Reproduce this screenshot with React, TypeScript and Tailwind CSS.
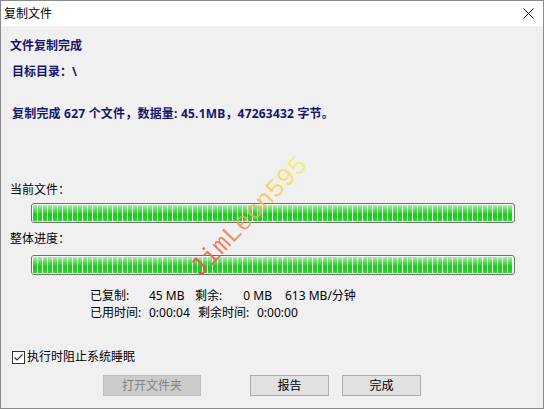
import React from "react";

const FONT = "font-['Noto_Sans','Noto_Sans_CJK_SC',sans-serif]";

function ProgressBar() {
  return (
    <div className="ml-[30px] w-[484px] h-[20px] rounded-[3px] border border-[#6f6f6f] bg-white p-px">
      <div className="h-full w-full bg-[image:repeating-linear-gradient(90deg,transparent_0_4px,#e6f7e6_4px_5px),linear-gradient(to_bottom,#a9eda9_0%,#55d955_35%,#1fc91f_60%,#2cd22c_100%)]" />
    </div>
  );
}

function Btn({ label, disabled, className }: { label: string; disabled?: boolean; className?: string }) {
  return (
    <button
      disabled={disabled}
      className={
        "h-[21px] border text-[12px] leading-[19px] " +
        (disabled
          ? "bg-[#cccccc] border-[#bfbfbf] text-[#838383] "
          : "bg-[#e1e1e1] border-[#adadad] text-black ") +
        (className ?? "")
      }
    >
      {label}
    </button>
  );
}

export default function App() {
  return (
    <div className={"relative w-[544px] h-[409px] border border-[#8a8a8a] bg-[#f0f0f0] flex flex-col text-[12px] " + FONT}>
      {/* title bar */}
      <div className="h-[25px] bg-white flex items-center justify-between pl-[3px] pr-[9px]">
        <span className="text-[12px] leading-[16px] text-black">复制文件</span>
        <svg width="11" height="11" viewBox="0 0 11 11">
          <path d="M0.5 0.5L10.5 10.5M10.5 0.5L0.5 10.5" stroke="#000" strokeWidth="1" />
        </svg>
      </div>

      <div className="flex flex-col">
        <div className="mt-[12px] ml-[9px] leading-[16px] font-bold text-[#16166b]">文件复制完成</div>
        <div className="mt-[10px] ml-[11px] leading-[16px] font-bold text-[#16166b]">目标目录：\</div>
        <div className="mt-[26px] ml-[11px] leading-[16px] font-bold text-[#16166b] text-[12px] tracking-[0.2px]">
          复制完成 627 个文件，数据量: 45.1MB，47263432 字节。
        </div>

        <div className="mt-[60px] ml-[9px] leading-[16px] text-black">当前文件：</div>
        <div className="mt-[5px]">
          <ProgressBar />
        </div>
        <div className="mt-[8px] ml-[9px] leading-[16px] text-black">整体进度：</div>
        <div className="mt-[8px]">
          <ProgressBar />
        </div>

        <div className="mt-[12px] ml-[89px] flex leading-[17px] text-black">
          <span className="w-[59px]">已复制:</span>
          <span className="w-[46px]">45 MB</span>
          <span className="w-[77px] flex justify-between">
            <span>剩余:</span>
            <span>0 MB</span>
          </span>
          <span className="ml-[13px]">613 MB/分钟</span>
        </div>
        <div className="ml-[89px] flex leading-[17px] text-black">
          <span className="w-[59px]">已用时间:</span>
          <span className="w-[49px]">0:00:04</span>
          <span className="w-[59px]">剩余时间:</span>
          <span>0:00:00</span>
        </div>

        <div className="mt-[27px] ml-[11px] flex items-center gap-[2px] h-[18px]">
          <svg width="13" height="13" viewBox="0 0 13 13">
            <rect x="0.5" y="0.5" width="12" height="12" fill="#fff" stroke="#333" />
            <path d="M2.5 6.5L5 9L10.5 3.5" fill="none" stroke="#333" strokeWidth="1.2" />
          </svg>
          <span className="leading-[16px] text-black">执行时阻止系统睡眠</span>
        </div>

        <div className="mt-[9px] flex">
          <Btn label="打开文件夹" disabled className="ml-[102px] w-[98px]" />
          <Btn label="报告" className="ml-[49px] w-[79px]" />
          <Btn label="完成" className="ml-[13px] w-[79px]" />
        </div>
      </div>

      {/* watermark */}
      <div className="absolute left-[248px] top-[216px] -translate-x-1/2 -translate-y-1/2 rotate-[-46deg] pointer-events-none">
        <span className="font-['Liberation_Mono',monospace] text-[26px] leading-[28px] whitespace-nowrap bg-[image:linear-gradient(to_right,#e8493e,#f29a6e_45%,#f3d35a_75%,#f2f26a)] bg-clip-text text-transparent opacity-90">
          JimLeon595
        </span>
      </div>
    </div>
  );
}
